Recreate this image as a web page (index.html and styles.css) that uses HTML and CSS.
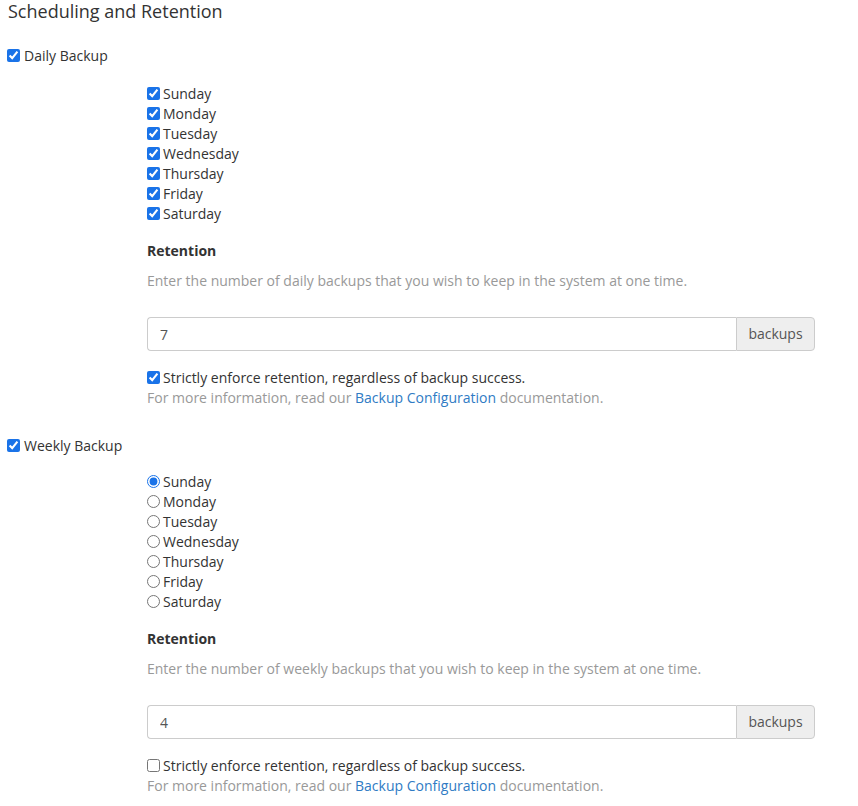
FILE: index.html
```html
<!DOCTYPE html>
<html lang="en">
<head>
<meta charset="utf-8">
<title>Scheduling and Retention</title>
<link rel="stylesheet" href="styles.css">
</head>
<body>
<div class="page">
  <h2 class="title">Scheduling and Retention</h2>

  <section class="backup">
    <label class="check top"><input type="checkbox" checked><span>Daily Backup</span></label>
    <div class="body">
      <div class="days">
        <label class="check"><input type="checkbox" checked><span>Sunday</span></label>
        <label class="check"><input type="checkbox" checked><span>Monday</span></label>
        <label class="check"><input type="checkbox" checked><span>Tuesday</span></label>
        <label class="check"><input type="checkbox" checked><span>Wednesday</span></label>
        <label class="check"><input type="checkbox" checked><span>Thursday</span></label>
        <label class="check"><input type="checkbox" checked><span>Friday</span></label>
        <label class="check"><input type="checkbox" checked><span>Saturday</span></label>
      </div>
      <div class="label">Retention</div>
      <div class="help">Enter the number of daily backups that you wish to keep in the system at one time.</div>
      <div class="group">
        <input class="field" type="text" value="7">
        <span class="addon">backups</span>
      </div>
      <label class="check"><input type="checkbox" checked><span>Strictly enforce retention, regardless of backup success.</span></label>
      <div class="info">For more information, read our <a href="#">Backup Configuration</a> documentation.</div>
    </div>
  </section>

  <section class="backup weekly">
    <label class="check top"><input type="checkbox" checked><span>Weekly Backup</span></label>
    <div class="body">
      <div class="days">
        <label class="check"><input type="radio" name="wk" checked><span>Sunday</span></label>
        <label class="check"><input type="radio" name="wk"><span>Monday</span></label>
        <label class="check"><input type="radio" name="wk"><span>Tuesday</span></label>
        <label class="check"><input type="radio" name="wk"><span>Wednesday</span></label>
        <label class="check"><input type="radio" name="wk"><span>Thursday</span></label>
        <label class="check"><input type="radio" name="wk"><span>Friday</span></label>
        <label class="check"><input type="radio" name="wk"><span>Saturday</span></label>
      </div>
      <div class="label">Retention</div>
      <div class="help">Enter the number of weekly backups that you wish to keep in the system at one time.</div>
      <div class="group">
        <input class="field" type="text" value="4">
        <span class="addon">backups</span>
      </div>
      <label class="check"><input type="checkbox"><span>Strictly enforce retention, regardless of backup success.</span></label>
      <div class="info">For more information, read our <a href="#">Backup Configuration</a> documentation.</div>
    </div>
  </section>
</div>
</body>
</html>
```

FILE: styles.css
```css
html, body {
  margin: 0;
  padding: 0;
  background: #fff;
}

body {
  font-family: "Open Sans", "Liberation Sans", sans-serif;
  font-size: 14px;
  line-height: 20px;
  color: #333;
}

.page {
  padding: 0 8px;
}

.title {
  margin: 0;
  font-size: 18px;
  line-height: 22px;
  font-weight: 400;
  color: #333;
}

.backup {
  margin-top: 24px;
}

.backup.weekly {
  margin-top: 28px;
}

.check {
  display: flex;
  align-items: center;
  gap: 3px;
  height: 20px;
  cursor: pointer;
}

.check input {
  margin: -2px 0 0 0;
  width: 13px;
  height: 13px;
  accent-color: #1a73e8;
  flex: none;
}

.check.top {
  gap: 4px;
}

.check.top input {
  margin-left: -1px;
}

.body {
  padding-left: 139px;
}

.days {
  margin-top: 18px;
  display: flex;
  flex-direction: column;
}

.weekly .days {
  margin-top: 16px;
}

.label {
  margin-top: 17px;
  font-weight: 700;
}

.help {
  margin-top: 10px;
  color: #999;
}

.group {
  margin-top: 26px;
  display: flex;
  width: 668px;
  height: 34px;
}

.field {
  flex: 1;
  min-width: 0;
  box-sizing: border-box;
  height: 34px;
  margin: 0;
  padding: 0 12px;
  border: 1px solid #ccc;
  border-right: 0;
  border-radius: 4px 0 0 4px;
  font: inherit;
  color: #555;
  outline: none;
}

.addon {
  box-sizing: border-box;
  width: 79px;
  height: 34px;
  display: flex;
  align-items: center;
  justify-content: center;
  background: #eee;
  border: 1px solid #ccc;
  border-radius: 0 4px 4px 0;
  color: #555;
}

.group + .check {
  margin-top: 17px;
}

.info {
  color: #999;
}

.info a {
  color: #2f7bc4;
  text-decoration: none;
}
```
